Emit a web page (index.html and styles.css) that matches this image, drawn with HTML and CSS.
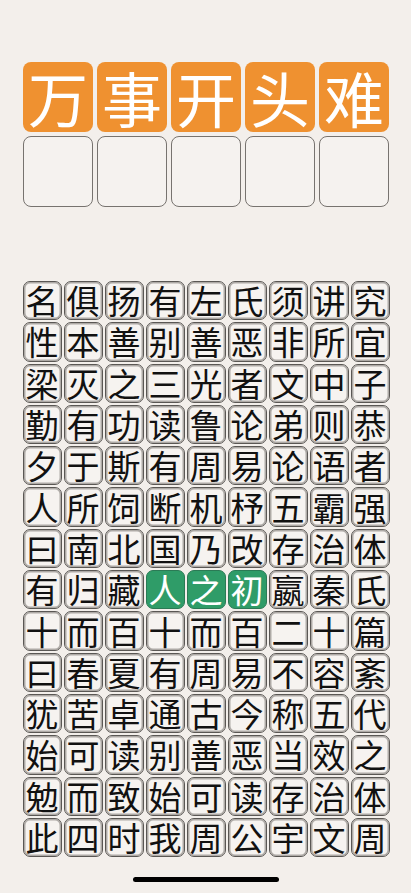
FILE: index.html
```html
<!DOCTYPE html>
<html lang="zh-CN">
<head>
<meta charset="utf-8">
<meta name="viewport" content="width=device-width, initial-scale=1">
<title>万事开头难</title>
<link rel="stylesheet" href="styles.css">
</head>
<body>
<div class="page">
  <div class="answer">
    <div class="tile filled">万</div>
    <div class="tile filled">事</div>
    <div class="tile filled">开</div>
    <div class="tile filled">头</div>
    <div class="tile filled">难</div>
    <div class="tile empty"></div>
    <div class="tile empty"></div>
    <div class="tile empty"></div>
    <div class="tile empty"></div>
    <div class="tile empty"></div>
  </div>

  <div class="board">
    <div class="cell">名</div><div class="cell">俱</div><div class="cell">扬</div><div class="cell">有</div><div class="cell">左</div><div class="cell">氏</div><div class="cell">须</div><div class="cell">讲</div><div class="cell">究</div>
    <div class="cell">性</div><div class="cell">本</div><div class="cell">善</div><div class="cell">别</div><div class="cell">善</div><div class="cell">恶</div><div class="cell">非</div><div class="cell">所</div><div class="cell">宜</div>
    <div class="cell">梁</div><div class="cell">灭</div><div class="cell">之</div><div class="cell">三</div><div class="cell">光</div><div class="cell">者</div><div class="cell">文</div><div class="cell">中</div><div class="cell">子</div>
    <div class="cell">勤</div><div class="cell">有</div><div class="cell">功</div><div class="cell">读</div><div class="cell">鲁</div><div class="cell">论</div><div class="cell">弟</div><div class="cell">则</div><div class="cell">恭</div>
    <div class="cell">夕</div><div class="cell">于</div><div class="cell">斯</div><div class="cell">有</div><div class="cell">周</div><div class="cell">易</div><div class="cell">论</div><div class="cell">语</div><div class="cell">者</div>
    <div class="cell">人</div><div class="cell">所</div><div class="cell">饲</div><div class="cell">断</div><div class="cell">机</div><div class="cell">杼</div><div class="cell">五</div><div class="cell">霸</div><div class="cell">强</div>
    <div class="cell">曰</div><div class="cell">南</div><div class="cell">北</div><div class="cell">国</div><div class="cell">乃</div><div class="cell">改</div><div class="cell">存</div><div class="cell">治</div><div class="cell">体</div>
    <div class="cell">有</div><div class="cell">归</div><div class="cell">藏</div><div class="cell selected">人</div><div class="cell selected">之</div><div class="cell selected">初</div><div class="cell">嬴</div><div class="cell">秦</div><div class="cell">氏</div>
    <div class="cell">十</div><div class="cell">而</div><div class="cell">百</div><div class="cell">十</div><div class="cell">而</div><div class="cell">百</div><div class="cell">二</div><div class="cell">十</div><div class="cell">篇</div>
    <div class="cell">曰</div><div class="cell">春</div><div class="cell">夏</div><div class="cell">有</div><div class="cell">周</div><div class="cell">易</div><div class="cell">不</div><div class="cell">容</div><div class="cell">紊</div>
    <div class="cell">犹</div><div class="cell">苦</div><div class="cell">卓</div><div class="cell">通</div><div class="cell">古</div><div class="cell">今</div><div class="cell">称</div><div class="cell">五</div><div class="cell">代</div>
    <div class="cell">始</div><div class="cell">可</div><div class="cell">读</div><div class="cell">别</div><div class="cell">善</div><div class="cell">恶</div><div class="cell">当</div><div class="cell">效</div><div class="cell">之</div>
    <div class="cell">勉</div><div class="cell">而</div><div class="cell">致</div><div class="cell">始</div><div class="cell">可</div><div class="cell">读</div><div class="cell">存</div><div class="cell">治</div><div class="cell">体</div>
    <div class="cell">此</div><div class="cell">四</div><div class="cell">时</div><div class="cell">我</div><div class="cell">周</div><div class="cell">公</div><div class="cell">宇</div><div class="cell">文</div><div class="cell">周</div>
  </div>

  <div class="home-bar"></div>
</div>
</body>
</html>
```

FILE: styles.css
```css
html, body {
  margin: 0;
  padding: 0;
  background: #f3efeb;
}

body {
  font-family: "Noto Sans CJK SC", "Noto Sans", sans-serif;
  width: 411px;
  height: 893px;
  overflow: hidden;
}

.page {
  display: flex;
  flex-direction: column;
  align-items: center;
  padding-top: 62px;
}

.answer {
  display: grid;
  grid-template-columns: repeat(5, 70px);
  grid-auto-rows: 70px;
  column-gap: 4px;
  row-gap: 4px;
  margin-left: 1px;
}

.tile {
  box-sizing: border-box;
  border-radius: 8px;
  display: flex;
  align-items: center;
  justify-content: center;
}

.tile.filled {
  background: #ef9130;
  color: #ffffff;
  font-size: 60px;
  font-weight: 400;
  line-height: 1;
}

.tile.empty {
  background: #f5f2ef;
  border: 1.5px solid #77736f;
  height: 71px;
}

.board {
  margin-top: 75px;
  display: grid;
  grid-template-columns: repeat(9, 39px);
  grid-auto-rows: 39.3px;
  column-gap: 2px;
  row-gap: 2px;
  margin-left: 1px;
}

.cell {
  box-sizing: border-box;
  border: 1px solid #5a5754;
  box-shadow: inset 0 0 0 1.5px #aeaaa6;
  border-radius: 7px;
  background: #f6f3f0;
  color: #111111;
  font-size: 33px;
  font-weight: 400;
  line-height: 1;
  display: flex;
  align-items: center;
  justify-content: center;
}

.cell.selected {
  background: #2f9c68;
  border-color: #2b7a55;
  box-shadow: none;
  color: #ffffff;
}

.home-bar {
  margin-top: 20px;
  width: 146px;
  height: 5px;
  border-radius: 3px;
  background: #000000;
}
```
